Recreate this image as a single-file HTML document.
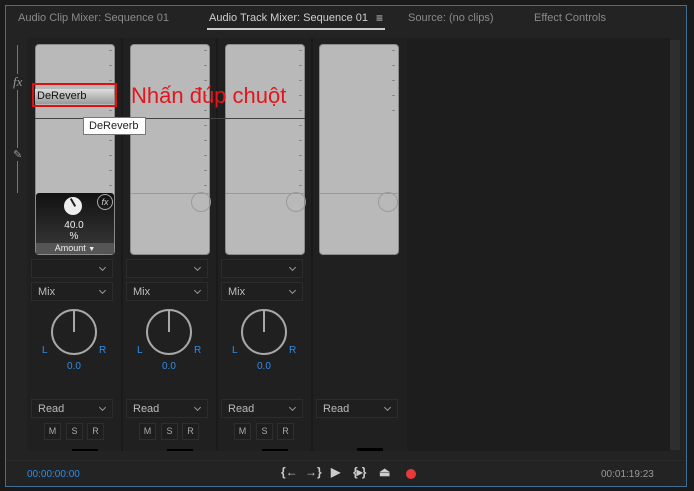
<!DOCTYPE html>
<html><head><meta charset="utf-8"><style>
*{margin:0;padding:0;box-sizing:border-box}
body{width:694px;height:491px;background:#1a1a1a;position:relative;overflow:hidden;font-family:"Liberation Sans",sans-serif;font-size:11px;color:#bbb}
.a{position:absolute}
.fader{position:absolute;top:44px;width:80px;height:211px;background:#b9b9b9;border-radius:4px;border:1px solid #8a8a8a}
.tick{position:absolute;width:3px;height:1px;background:#888}
.knobc{position:absolute;width:20px;height:20px;border:1.5px solid #9a9a9a;border-radius:50%}
.dd{position:absolute;height:19px;background:#1f1f1f;border:1px solid #2c2c2c;color:#bbb;padding:3px 6px;font-size:11px}
.dd:after{content:"";position:absolute;right:7px;top:5px;width:4px;height:4px;border-right:1px solid #999;border-bottom:1px solid #999;transform:rotate(45deg)}
.pan{position:absolute;width:46px;height:46px;border:2px solid #a8a8a8;border-radius:50%}
.pan:after{content:"";position:absolute;left:20px;top:-1px;width:2px;height:22px;background:#a8a8a8}
.blue{color:#2d8ceb;font-size:10px}
.btn{position:absolute;width:17px;height:17px;border:1px solid #2e2e2e;background:#1e1e1e;color:#aaa;font-size:9px;text-align:center;line-height:15px}
.ic{position:absolute;top:465px;color:#ccc;font-size:12px;font-weight:bold;white-space:nowrap}
</style></head><body>
<div class="a" style="left:5px;top:5px;width:682px;height:482px;border:1px solid #3f6f95;background:#232323"></div>
<div class="a" style="left:18px;top:12px;color:#8a8a8a">Audio Clip Mixer: Sequence 01</div>
<div class="a" style="left:209px;top:12px;color:#cfcfcf">Audio Track Mixer: Sequence 01</div>
<div class="a" style="left:376px;top:11px;color:#ccc;font-size:12px">≡</div>
<div class="a" style="left:207px;top:28px;width:178px;height:2px;background:#ccc"></div>
<div class="a" style="left:408px;top:12px;color:#8a8a8a">Source: (no clips)</div>
<div class="a" style="left:534px;top:12px;color:#8a8a8a">Effect Controls</div>
<div class="a" style="left:27px;top:38px;width:380px;height:413px;background:#202020"></div>
<div class="a" style="left:407px;top:38px;width:263px;height:413px;background:#1d1d1d"></div>
<div class="a" style="left:670px;top:40px;width:10px;height:410px;background:#2e2e2e"></div>
<div class="a" style="left:121px;top:38px;width:2px;height:413px;background:#1a1a1a"></div>
<div class="a" style="left:216px;top:38px;width:2px;height:413px;background:#1a1a1a"></div>
<div class="a" style="left:311px;top:38px;width:2px;height:413px;background:#1a1a1a"></div>
<div class="a" style="left:17px;top:45px;width:1px;height:148px;background:#777"></div>
<div class="a" style="left:13px;top:74px;color:#999;font-style:italic;font-family:'Liberation Serif',serif;font-size:13px;background:#232323">fx</div>
<div class="a" style="left:13px;top:148px;color:#999;font-size:11px;background:#232323">✎</div>
<div class="fader" style="left:35px"></div>
<div class="fader" style="left:130px"></div>
<div class="fader" style="left:225px"></div>
<div class="fader" style="left:319px"></div>
<div class="a" style="left:35px;top:118px;width:270px;height:1px;background:#444"></div>
<div class="a" style="left:131px;top:193px;width:78px;height:1px;background:#999"></div>
<div class="a" style="left:226px;top:193px;width:78px;height:1px;background:#999"></div>
<div class="a" style="left:320px;top:193px;width:78px;height:1px;background:#999"></div>
<div class="knobc" style="left:191px;top:192px"></div>
<div class="knobc" style="left:286px;top:192px"></div>
<div class="knobc" style="left:378px;top:192px"></div>
<div id="t"></div>
<div class="a" style="left:36px;top:193px;width:78px;height:61px;background:linear-gradient(#111,#3a3a3a);border-radius:3px"></div>
<div class="a" style="left:64px;top:197px;width:18px;height:18px;border-radius:50%;background:#eee"></div>
<div class="a" style="left:72px;top:198px;width:2px;height:9px;background:#222;transform:rotate(-30deg)"></div>
<div class="a" style="left:97px;top:194px;width:16px;height:16px;border-radius:50%;border:1px solid #aaa;color:#ccc;font-size:9px;font-style:italic;text-align:center;line-height:14px">fx</div>
<div class="a" style="left:36px;top:220px;width:76px;text-align:center;color:#eee;font-size:10px;line-height:11px">40.0<br>%</div>
<div class="a" style="left:36px;top:243px;width:78px;height:11px;background:#555;color:#eee;font-size:9px;text-align:center;line-height:11px">Amount <span style="font-size:7px">▼</span></div>
<div class="a" style="left:35px;top:89px;width:79px;height:15px;background:linear-gradient(#ddd,#9a9a9a);color:#111;font-size:11px;padding:1px 2px">DeReverb</div>
<div class="a" style="left:32px;top:83px;width:85px;height:24px;border:2px solid #e01010"></div>
<div class="a" style="left:131px;top:83px;color:#e8141a;font-size:22px;line-height:26px">Nhấn đúp chuột</div>
<div class="a" style="left:83px;top:117px;width:63px;height:18px;background:#fff;border:1px solid #777;color:#222;font-size:11px;padding:2px 5px">DeReverb</div>
<div class="dd" style="left:31px;top:259px;width:82px"></div>
<div class="dd" style="left:126px;top:259px;width:82px"></div>
<div class="dd" style="left:221px;top:259px;width:82px"></div>
<div class="dd" style="left:31px;top:282px;width:82px">Mix</div>
<div class="dd" style="left:126px;top:282px;width:82px">Mix</div>
<div class="dd" style="left:221px;top:282px;width:82px">Mix</div>
<div class="pan" style="left:51px;top:309px"></div>
<div class="pan" style="left:146px;top:309px"></div>
<div class="pan" style="left:241px;top:309px"></div>
<div class="a blue" style="left:42px;top:345px">L</div><div class="a blue" style="left:99px;top:345px">R</div><div class="a blue" style="left:67px;top:361px">0.0</div>
<div class="a blue" style="left:137px;top:345px">L</div><div class="a blue" style="left:194px;top:345px">R</div><div class="a blue" style="left:162px;top:361px">0.0</div>
<div class="a blue" style="left:232px;top:345px">L</div><div class="a blue" style="left:289px;top:345px">R</div><div class="a blue" style="left:257px;top:361px">0.0</div>
<div class="dd" style="left:31px;top:399px;width:82px">Read</div>
<div class="dd" style="left:126px;top:399px;width:82px">Read</div>
<div class="dd" style="left:221px;top:399px;width:82px">Read</div>
<div class="dd" style="left:316px;top:399px;width:82px">Read</div>
<div class="btn" style="left:44px;top:423px">M</div><div class="btn" style="left:66px;top:423px">S</div><div class="btn" style="left:87px;top:423px">R</div>
<div class="btn" style="left:139px;top:423px">M</div><div class="btn" style="left:161px;top:423px">S</div><div class="btn" style="left:182px;top:423px">R</div>
<div class="btn" style="left:234px;top:423px">M</div><div class="btn" style="left:256px;top:423px">S</div><div class="btn" style="left:277px;top:423px">R</div>
<div class="a" style="left:72px;top:449px;width:26px;height:2px;background:#000"></div>
<div class="a" style="left:167px;top:449px;width:26px;height:2px;background:#000"></div>
<div class="a" style="left:262px;top:449px;width:26px;height:2px;background:#000"></div>
<div class="a" style="left:357px;top:448px;width:26px;height:3px;background:#000"></div>
<div class="a" style="left:6px;top:460px;width:680px;height:1px;background:#2a2a2a"></div>
<div class="a" style="left:27px;top:469px;color:#2d8ceb;font-size:10px">00:00:00:00</div>
<div class="ic" style="left:281px">{←</div>
<div class="ic" style="left:305px">→}</div>
<div class="ic" style="left:331px">▶</div>
<div class="ic" style="left:353px;letter-spacing:-1px">{▸}</div>
<div class="ic" style="left:379px">⏏</div>
<div class="a" style="left:406px;top:469px;width:10px;height:10px;border-radius:50%;background:#e83a3a"></div>
<div class="a" style="left:601px;top:469px;color:#999;font-size:10px">00:01:19:23</div>
<script>
var t=document.getElementById('t'),h='';
[109,204,299].forEach(function(x){for(var y=50;y<=186;y+=15)h+='<div class="tick" style="left:'+x+'px;top:'+y+'px"></div>';});
for(var y=50;y<=110;y+=15)h+='<div class="tick" style="left:392px;top:'+y+'px"></div>';
t.innerHTML=h;
</script>
</body></html>
